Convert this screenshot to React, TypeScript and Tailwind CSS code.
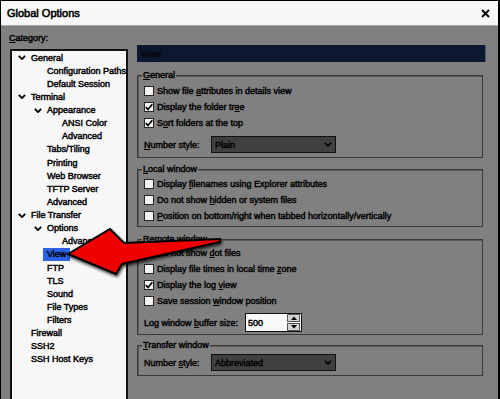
import type { ReactNode } from "react";

type TreeNode = { label: string; level: 0 | 1 | 2; open?: boolean; selected?: boolean };

const tree: TreeNode[] = [
  { label: "General", level: 0, open: true },
  { label: "Configuration Paths", level: 1 },
  { label: "Default Session", level: 1 },
  { label: "Terminal", level: 0, open: true },
  { label: "Appearance", level: 1, open: true },
  { label: "ANSI Color", level: 2 },
  { label: "Advanced", level: 2 },
  { label: "Tabs/Tiling", level: 1 },
  { label: "Printing", level: 1 },
  { label: "Web Browser", level: 1 },
  { label: "TFTP Server", level: 1 },
  { label: "Advanced", level: 1 },
  { label: "File Transfer", level: 0, open: true },
  { label: "Options", level: 1, open: true },
  { label: "Advanced", level: 2 },
  { label: "View", level: 1, selected: true },
  { label: "FTP", level: 1 },
  { label: "TLS", level: 1 },
  { label: "Sound", level: 1 },
  { label: "File Types", level: 1 },
  { label: "Filters", level: 1 },
  { label: "Firewall", level: 0 },
  { label: "SSH2", level: 0 },
  { label: "SSH Host Keys", level: 0 },
];

const indent = ["pl-[6px]", "pl-[22px]", "pl-[37px]"];

function Chevron() {
  return (
    <svg width="8" height="5" viewBox="0 0 8 5">
      <path d="M0.8 0.8 L4 4.1 L7.2 0.8" fill="none" stroke="#000" strokeWidth="1.8" />
    </svg>
  );
}

function Check({ on, children }: { on?: boolean; children: ReactNode }) {
  return (
    <div className="flex h-[16px] items-center gap-[3px]">
      <span className="flex h-[10px] w-[10px] items-center justify-center border border-[#262626] bg-[#f3f3f3]">
        {on && (
          <svg width="8" height="8" viewBox="0 0 8 8">
            <path d="M0.8 4.2 L3 6.5 L7.3 1.2" fill="none" stroke="#000" strokeWidth="1.7" />
          </svg>
        )}
      </span>
      <span>{children}</span>
    </div>
  );
}

function Group({ title, className, children }: { title: ReactNode; className: string; children: ReactNode }) {
  return (
    <div className={`relative w-[346px] border border-[#3a3a3a] shadow-[inset_1px_1px_0_#5c5c5c] pl-[6px] ${className}`}>
      <span className="absolute -top-[7px] left-[4px] bg-[#808080] px-[1px] leading-[12px]">{title}</span>
      {children}
    </div>
  );
}

function Select({ value }: { value: string }) {
  return (
    <div className="flex h-[17px] w-[125px] items-center justify-between border border-[#111] bg-[#404040] pl-[3px] pr-[3px]">
      <span>{value}</span>
      <svg width="8" height="5" viewBox="0 0 8 5">
        <path d="M0.8 0.8 L4 4.1 L7.2 0.8" fill="none" stroke="#000" strokeWidth="1.6" />
      </svg>
    </div>
  );
}

function StyleRow({ children, value, className }: { children: ReactNode; value: string; className?: string }) {
  return (
    <div className={`flex items-center ${className ?? ""}`}>
      <span className="w-[67px]">{children}</span>
      <Select value={value} />
    </div>
  );
}

export default function App() {
  return (
    <div className="relative h-[399px] w-[500px] overflow-hidden border-t border-l border-r-2 border-black bg-[#808080] font-['Liberation_Sans',Arial,sans-serif] text-[9px] leading-[12px] text-black [-webkit-text-stroke:0.45px_#000]">
      {/* title bar */}
      <div className="flex h-[25px] items-center justify-between border-b border-[#a9a9a9] bg-[#f7f7f7] pl-[6px] pr-[8px]">
        <span className="text-[11px] [-webkit-text-stroke:0.55px_#000]">Global Options</span>
        <svg width="9" height="9" viewBox="0 0 9 9">
          <path d="M1 1 L8 8 M8 1 L1 8" stroke="#000" strokeWidth="1.9" />
        </svg>
      </div>

      <div className="flex">
        {/* category tree */}
        <div className="w-[127px] shrink-0 pt-[6px]">
          <div className="pl-[8px]">
            <u className="underline-offset-1">C</u>ategory:
          </div>
          <div className="ml-[9px] mt-[5px] h-[352px] w-[118px] border-2 border-[#111] bg-[#f7f7f7]">
            {tree.map((n, i) => (
              <div key={i} className={`flex h-[13.13px] items-center ${indent[n.level]}`}>
                <span className="flex w-[13px] shrink-0">{n.open && <Chevron />}</span>
                <span className={n.selected ? "-ml-[4px] bg-[#2d62e8] px-[4px] leading-[13px] text-[#050505]" : "whitespace-nowrap"}>
                  {n.label}
                </span>
              </div>
            ))}
          </div>
        </div>

        {/* view panel */}
        <div className="ml-[9px] flex flex-col pt-[19px]">
          <div className="flex h-[17px] w-[349px] items-center border-r border-[#4b5a74] bg-[#0c1830] pl-[4px] font-bold text-[#050505] [-webkit-text-stroke:0px]">
            View
          </div>

          <Group title={<><u className="underline-offset-1">G</u>eneral</>} className="mt-[13px] pt-[7px] pb-[4px]">
            <Check>Show file <u className="underline-offset-1">a</u>ttributes in details view</Check>
            <Check on>Display the folder tr<u className="underline-offset-1">e</u>e</Check>
            <Check on>S<u className="underline-offset-1">o</u>rt folders at the top</Check>
            <StyleRow value="Plain" className="mt-[5px]">
              <u className="underline-offset-1">N</u>umber style:
            </StyleRow>
          </Group>

          <Group title={<><u className="underline-offset-1">L</u>ocal window</>} className="mt-[11px] pt-[6px] pb-[2px]">
            <Check>Display <u className="underline-offset-1">f</u>ilenames using Explorer attributes</Check>
            <Check>Do not show <u className="underline-offset-1">h</u>idden or system files</Check>
            <Check><u className="underline-offset-1">P</u>osition on bottom/right when tabbed horizontally/vertically</Check>
          </Group>

          <Group title={<><u className="underline-offset-1">R</u>emote window</>} className="mt-[12px] pt-[5px] pb-[2px]">
            <Check on>Do not show <u className="underline-offset-1">d</u>ot files</Check>
            <Check>Display file times in local time <u className="underline-offset-1">z</u>one</Check>
            <Check on>Display the log <u className="underline-offset-1">v</u>iew</Check>
            <Check>Save session <u className="underline-offset-1">w</u>indow position</Check>
            <div className="mt-[4px] flex items-center">
              <span className="w-[101px]">
                Log window <u className="underline-offset-1">b</u>uffer size:
              </span>
              <div className="flex h-[19px] w-[57px] items-center justify-between border border-[#111] bg-[#f8f8f8] pl-[2px] pr-[1px]">
                <span>500</span>
                <div className="flex flex-col gap-px">
                  <span className="flex h-[8px] w-[13px] items-center justify-center border border-[#555] bg-[#d4d4d4]">
                    <svg width="6" height="4" viewBox="0 0 6 4"><path d="M0 4 L3 0.5 L6 4Z" fill="#000" /></svg>
                  </span>
                  <span className="flex h-[8px] w-[13px] items-center justify-center border border-[#555] bg-[#d4d4d4]">
                    <svg width="6" height="4" viewBox="0 0 6 4"><path d="M0 0 L3 3.5 L6 0Z" fill="#000" /></svg>
                  </span>
                </div>
              </div>
            </div>
          </Group>

          <Group title={<><u className="underline-offset-1">T</u>ransfer window</>} className="mt-[10px] pt-[8px] pb-[4px]">
            <StyleRow value="Abbreviated">
              Number <u className="underline-offset-1">s</u>tyle:
            </StyleRow>
          </Group>
        </div>
      </div>

      {/* red annotation arrow */}
      <svg className="pointer-events-none absolute left-0 top-0" width="500" height="399" viewBox="0 0 500 399">
        <defs>
          <filter id="sh" x="-20%" y="-40%" width="140%" height="180%">
            <feDropShadow dx="1" dy="2" stdDeviation="1.6" floodColor="#000" floodOpacity="0.75" />
          </filter>
        </defs>
        <polygon
          points="67,253 109,228 123,242 219,238 219,241 121,263 115,273"
          fill="#f00000"
          stroke="#000"
          strokeWidth="2"
          strokeLinejoin="miter"
          filter="url(#sh)"
        />
      </svg>
    </div>
  );
}
